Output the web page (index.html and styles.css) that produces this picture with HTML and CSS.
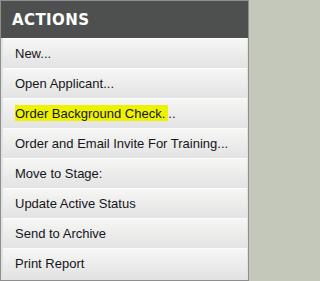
FILE: index.html
```html
<!DOCTYPE html>
<html>
<head>
<meta charset="utf-8">
<link rel="stylesheet" href="styles.css">
</head>
<body>
<div class="panel">
  <div class="panel-head">ACTIONS</div>
  <ul class="menu">
    <li class="item">New...</li>
    <li class="item">Open Applicant...</li>
    <li class="item"><span class="hl">Order Background Check.</span>..</li>
    <li class="item">Order and Email Invite For Training...</li>
    <li class="item">Move to Stage:</li>
    <li class="item">Update Active Status</li>
    <li class="item">Send to Archive</li>
    <li class="item">Print Report</li>
  </ul>
</div>
</body>
</html>
```
FILE: styles.css
```css
html, body {
  margin: 0;
  padding: 0;
  background: #c3c8ba;
}
.panel {
  width: 247px;
  height: 279px;
  border: 1px solid #8e8e8e;
  background: #e2e2e2;
  display: flex;
  flex-direction: column;
}
.panel-head {
  height: 37px;
  background: #4e504f;
  color: #fff;
  font-family: "DejaVu Sans", Verdana, sans-serif;
  font-weight: bold;
  font-size: 15px;
  letter-spacing: 0.4px;
  display: flex;
  align-items: center;
  padding-left: 11px;
}
.menu {
  list-style: none;
  margin: 0;
  padding: 0 1px 0 2px;
  display: flex;
  flex-direction: column;
}
.item {
  height: 29px;
  line-height: 29px;
  border-top: 1px solid #fdfdfd;
  background: linear-gradient(#f6f6f5, #e3e3e3);
  padding-left: 12px;
  font-family: "Liberation Sans", Arial, sans-serif;
  font-size: 13px;
  color: #151520;
  white-space: nowrap;
}
.hl {
  background: #eef200;
  padding: 1px 3px 0 0;
}
```
